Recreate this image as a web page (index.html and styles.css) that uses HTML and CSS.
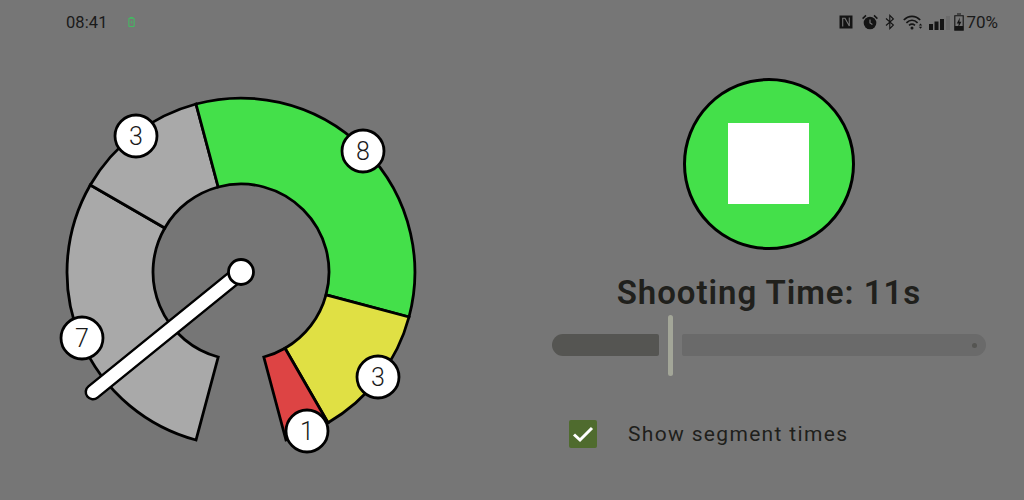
FILE: index.html
```html
<!DOCTYPE html>
<html lang="en">
<head>
<meta charset="utf-8">
<title>Shooting Timer</title>
<link rel="stylesheet" href="styles.css">
</head>
<body>
<div class="screen">
  <header class="status">
    <div class="status-left">
      <span class="clock">08:41</span>
      <svg class="charge" viewBox="0 0 8 12" width="7" height="12"><path d="M2.500 1.500V.8h3v.7M1 1.800h6v9.400H1z" fill="none" stroke="#40c060" stroke-width="1.100"/><path d="M4.400 3.200 2.800 6.600h1.400l-.6 2.400 1.700-3.400H3.900z" fill="#40c060"/></svg>
    </div>
    <div class="status-right">
      <svg class="ic-nfc" viewBox="0 0 14 14" width="14" height="14"><path d="M.5 .5h13v13H.5z" fill="#141414"/><path d="M3.700 11.500V3.200H6L10.300 11V2.500" fill="none" stroke="#757575" stroke-width="1.100"/></svg>
      <svg class="ic-alarm" viewBox="0 0 16 16" width="16" height="16"><circle cx="8" cy="9" r="6.300" fill="#141414"/><path d="M8 5.500V9l2.400 1.600" fill="none" stroke="#757575" stroke-width="1.200"/><path d="M.6 4.600 4 1.400M15.400 4.600 12 1.400" stroke="#141414" stroke-width="1.500" fill="none"/></svg>
      <svg class="ic-bt" viewBox="0 0 10 16" width="10" height="16"><path d="M1 4.500 8.400 11 4.800 14.600V1.400L8.400 5 1 11.500" fill="none" stroke="#141414" stroke-width="1.100"/></svg>
      <svg class="ic-wifi" viewBox="0 0 20 16" width="20" height="16"><path d="M.8 6C5.500 1.200 12.500 1.200 17.200 6M3.400 8.800C6.800 5.500 11.200 5.500 14.600 8.800M6 11.300C7.800 9.800 10.200 9.800 12 11.300" fill="none" stroke="#141414" stroke-width="1.700"/><circle cx="9" cy="14" r="1.500" fill="#141414"/><path d="M15.800 11.400h3.400l-1.700-1.900zM15.800 12.800h3.400l-1.700 1.900z" fill="#141414"/></svg>
      <svg class="ic-signal" viewBox="0 0 21 14" width="21" height="14"><path d="M0 8h4v6H0zM5.500 5.500h4V14h-4zM11 3h4v11h-4z" fill="#141414"/><path d="M17 0h4v14h-4z" fill="#6c6c6c"/></svg>
      <svg class="ic-batt" viewBox="0 0 10 18" width="10" height="18"><path d="M3 1h4M.8 2.800h8.400v14.400H.8z" fill="none" stroke="#141414" stroke-width="1.100"/><path d="M.8 13h8.400v4H.8z" fill="#141414"/><path d="M5.900 4.500 2.800 10.500h2l-.8 4.500L7.400 8.800h-2z" fill="#141414"/></svg>
      <span class="pct">70%</span>
    </div>
  </header>
  <main class="main">
    <svg class="dial" viewBox="0 0 360 420" width="360" height="420">
      <g class="sectors" transform="translate(181 226)">
        <path class="grey" d="M-45 168A174 174 0 0 1 -150.700 -87L-76.200 -44A88 88 0 0 0 -22.800 85Z"/>
        <path class="grey" d="M-150.700 -87A174 174 0 0 1 -45 -168L-22.800 -85A88 88 0 0 0 -76.200 -44Z"/>
        <path class="green" d="M-45 -168A174 174 0 0 1 168 45L85 22.800A88 88 0 0 0 -22.800 -85Z"/>
        <path class="yellow" d="M168 45A174 174 0 0 1 87 150.700L44 76.200A88 88 0 0 0 85 22.800Z"/>
        <path class="red" d="M87 150.700A174 174 0 0 1 45 168L22.800 85A88 88 0 0 0 44 76.200Z"/>
      </g>
      <line class="needle-o" x1="181" y1="226" x2="33" y2="346"/>
      <line class="needle-i" x1="181" y1="226" x2="33" y2="346"/>
      <circle class="knob" cx="181" cy="226" r="12.500"/>
      <g class="marks">
        <circle cx="22" cy="292" r="21"/><text x="22" y="292" dy=".36em">7</text>
        <circle cx="76" cy="90" r="21"/><text x="76" y="90" dy=".36em">3</text>
        <circle cx="303" cy="105" r="21"/><text x="303" y="105" dy=".36em">8</text>
        <circle cx="318" cy="331" r="21"/><text x="318" y="331" dy=".36em">3</text>
        <circle cx="247" cy="385" r="21"/><text x="247" y="385" dy=".36em">1</text>
      </g>
    </svg>
    <section class="panel">
      <button class="record" type="button" aria-label="Stop"><span class="stop"></span></button>
      <h1 class="title">Shooting Time: 11s</h1>
      <div class="slider">
        <div class="track-on"></div>
        <div class="thumb"></div>
        <div class="track-off"><span class="dot"></span></div>
      </div>
      <label class="option">
        <span class="box"><svg viewBox="0 0 28 28" width="28" height="28"><path d="M5 14.500 11 20 23 8" fill="none" stroke="#fff" stroke-width="3"/></svg></span>
        <span class="option-text">Show segment times</span>
      </label>
    </section>
  </main>
</div>
</body>
</html>
```

FILE: styles.css
```css
* { box-sizing: border-box; }
html, body { margin: 0; padding: 0; }
body { width: 1024px; height: 500px; overflow: hidden; background: #767676; font-family: Roboto, sans-serif; color: #1f1f1c; }
.screen { width: 1024px; height: 500px; display: flex; flex-direction: column; }
.status { height: 46px; flex: none; display: flex; justify-content: space-between; align-items: center; padding: 0 26px 2px 66px; color: #1a1a1a; font-size: 16.5px; }
.status-left { display: flex; align-items: center; gap: 20px; }
.clock { letter-spacing: .1px; }
.charge { display: block; }
.status-right { display: flex; align-items: center; }
.status-right svg { display: block; }
.ic-alarm { margin-left: 9px; }
.ic-bt { margin-left: 7px; }
.ic-wifi { margin-left: 8px; }
.ic-signal { margin-left: 6px; margin-top: 2px; }
.ic-batt { margin-left: 4px; }
.pct { margin-left: 2.5px; font-size: 17px; }
.main { flex: 1; display: flex; align-items: flex-start; padding-left: 60px; }
.dial { display: block; flex: none; overflow: visible; }
.sectors path { stroke: #000; stroke-width: 2.800; stroke-linejoin: miter; }
.grey { fill: #a9a9a9; }
.green { fill: #44e04a; }
.yellow { fill: #e0e044; }
.red { fill: #dd4444; }
.needle-o { stroke: #000; stroke-width: 17; stroke-linecap: round; }
.needle-i { stroke: #fff; stroke-width: 12; stroke-linecap: round; }
.knob { fill: #fff; stroke: #000; stroke-width: 2.800; }
.marks circle { fill: #fff; stroke: #000; stroke-width: 2.800; }
.marks text { font-family: Roboto, sans-serif; font-size: 25px; text-anchor: middle; fill: #1a1a1a; font-weight: 350; }
.panel { width: 434px; margin-left: 132px; display: flex; flex-direction: column; align-items: center; padding-top: 32px; }
.record { width: 172px; height: 172px; border-radius: 50%; background: #44e04a; border: 3px solid #000; padding: 0; display: flex; align-items: center; justify-content: center; }
.stop { display: block; width: 81px; height: 81px; margin: -1px 0 0 -1px; background: #fff; }
.title { margin: 21px 0 0; font-size: 33px; line-height: 44px; font-weight: 650; letter-spacing: .95px; color: #20201c; }
.slider { width: 434px; height: 61px; display: flex; align-items: center; }
.track-on { width: 107px; height: 22px; margin-bottom: 1px; background: #555552; border-radius: 11px 2px 2px 11px; }
.thumb { width: 5px; height: 61px; margin: 0 9px; background: #a3a698; border-radius: 3px; }
.track-off { flex: 1; height: 22px; margin-bottom: 1px; background: #6a6a6a; border-radius: 2px 11px 11px 2px; display: flex; align-items: center; justify-content: flex-end; padding-right: 9px; }
.dot { width: 5px; height: 5px; border-radius: 50%; background: #555552; }
.option { display: flex; align-items: center; align-self: flex-start; margin: 44px 0 0 17px; }
.box { width: 28px; height: 28px; background: #4f6b2e; border-radius: 2px; display: block; }
.box svg { display: block; }
.option-text { margin-left: 31px; font-size: 21px; letter-spacing: 1.33px; color: #1f1f1c; }
```
